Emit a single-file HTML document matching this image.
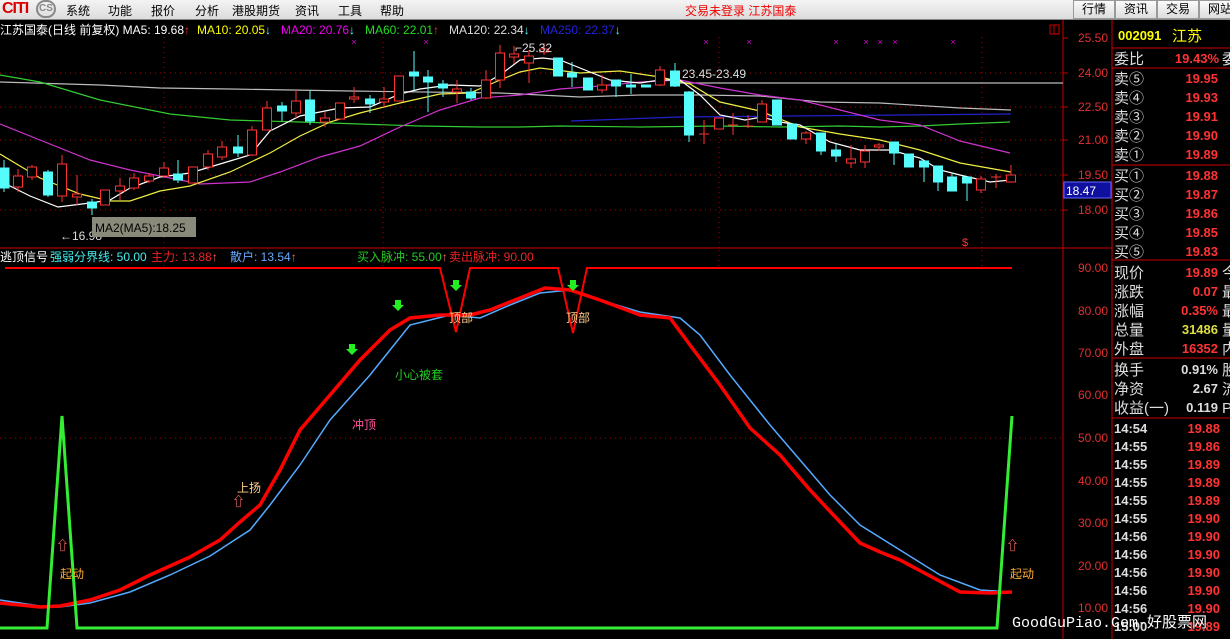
<!DOCTYPE html>
<html><head><meta charset="utf-8"><style>
*{margin:0;padding:0}
body{width:1230px;height:639px;background:#000;overflow:hidden;position:relative;font-family:"Liberation Sans","Noto Sans CJK SC",sans-serif}
#menu{position:absolute;left:0;top:0;width:1230px;height:19px;background:linear-gradient(#f4f4f4,#dcdcdc);font-size:12px;color:#000}
#menu span{position:absolute;top:2px}
.btn{position:absolute;top:0;height:17px;width:40px;border:1px solid #999;background:linear-gradient(#fafafa,#ddd);text-align:center;font-size:12px;line-height:17px}
svg{position:absolute;left:0;top:0}
</style></head><body>
<div id="menu">
<span style="left:2px;top:0;font:bold 16px 'Liberation Sans';color:#d00;letter-spacing:-1px">CITI</span>
<span style="left:36px;top:0;width:20px;height:18px;border-radius:10px;border:2px solid #888;box-sizing:border-box;font:bold 10px 'Liberation Sans';color:#888;text-align:center;line-height:14px">CS</span>
<span style="left:66px">系统</span><span style="left:108px">功能</span><span style="left:151px">报价</span><span style="left:195px">分析</span><span style="left:232px">港股期货</span><span style="left:295px">资讯</span><span style="left:338px">工具</span><span style="left:380px">帮助</span>
<span style="left:685px;color:#e00">交易未登录 江苏国泰</span>
<div class="btn" style="left:1073px">行情</div><div class="btn" style="left:1115px">资讯</div><div class="btn" style="left:1157px">交易</div><div class="btn" style="left:1199px">网站</div>
</div>
<svg width="1230" height="639" viewBox="0 0 1230 639" style="top:0" font-family="Liberation Sans, Noto Sans CJK SC, sans-serif">
<rect x="0" y="19" width="1230" height="1" fill="#888"/>
<g stroke="#a00" stroke-dasharray="1,4" stroke-width="1">
<line x1="0" y1="73" x2="1063" y2="73"/><line x1="0" y1="107" x2="1063" y2="107"/><line x1="0" y1="140" x2="1063" y2="140"/><line x1="0" y1="175" x2="1063" y2="175"/><line x1="0" y1="210" x2="1063" y2="210"/>
<line x1="164" y1="37" x2="164" y2="248"/><line x1="383" y1="37" x2="383" y2="248"/><line x1="719" y1="37" x2="719" y2="248"/><line x1="982" y1="37" x2="982" y2="248"/>
<line x1="0" y1="438" x2="1063" y2="438"/>
<line x1="164" y1="250" x2="164" y2="270"/><line x1="383" y1="250" x2="383" y2="270"/><line x1="719" y1="250" x2="719" y2="270"/><line x1="982" y1="250" x2="982" y2="270"/>
</g>
<g stroke="#c00" fill="none">
<line x1="1063" y1="20" x2="1063" y2="639"/><line x1="1112" y1="20" x2="1112" y2="639"/>
<line x1="0" y1="248" x2="1112" y2="248"/>
<line x1="1112" y1="48" x2="1230" y2="48"/><line x1="1112" y1="68" x2="1230" y2="68"/><line x1="1112" y1="165" x2="1230" y2="165"/><line x1="1112" y1="260" x2="1230" y2="260"/><line x1="1112" y1="358" x2="1230" y2="358"/><line x1="1112" y1="418" x2="1230" y2="418"/>
<rect x="1050" y="25" width="9" height="9"/><line x1="1054" y1="25" x2="1054" y2="34"/>
<line x1="1063" y1="38" x2="1068" y2="38"/><line x1="1063" y1="73" x2="1068" y2="73"/><line x1="1063" y1="107" x2="1068" y2="107"/><line x1="1063" y1="140" x2="1068" y2="140"/><line x1="1063" y1="175" x2="1068" y2="175"/><line x1="1063" y1="210" x2="1068" y2="210"/>
</g>
<g fill="#e03030" font-size="12" text-anchor="end">
<text x="1108" y="42">25.50</text><text x="1108" y="77">24.00</text><text x="1108" y="111">22.50</text><text x="1108" y="144">21.00</text><text x="1108" y="179">19.50</text><text x="1108" y="214">18.00</text>
<text x="1108" y="272">90.00</text><text x="1108" y="315">80.00</text><text x="1108" y="357">70.00</text><text x="1108" y="399">60.00</text><text x="1108" y="442">50.00</text><text x="1108" y="485">40.00</text><text x="1108" y="527">30.00</text><text x="1108" y="570">20.00</text><text x="1108" y="612">10.00</text>
</g>
<rect x="1064" y="182" width="47" height="16" fill="#1010a0" stroke="#66f"/>
<text x="1066" y="195" fill="#fff" font-size="12">18.47</text>
<g font-size="12">
<text x="0" y="34" fill="#fff">江苏国泰(日线 前复权) MA5: 19.68<tspan fill="#f33" font-weight="bold">↑</tspan></text>
<text x="197" y="34" fill="#ff0">MA10: 20.05<tspan fill="#5ff" font-weight="bold">↓</tspan></text>
<text x="281" y="34" fill="#e0e">MA20: 20.76<tspan fill="#5ff" font-weight="bold">↓</tspan></text>
<text x="365" y="34" fill="#2d2">MA60: 22.01<tspan fill="#f33" font-weight="bold">↑</tspan></text>
<text x="449" y="34" fill="#ddd">MA120: 22.34<tspan fill="#5ff" font-weight="bold">↓</tspan></text>
<text x="540" y="34" fill="#22d">MA250: 22.37<tspan fill="#5ff" font-weight="bold">↓</tspan></text>
<text x="0" y="261" fill="#fff">逃顶信号</text>
<text x="50" y="261" fill="#4ee">强弱分界线: 50.00</text>
<text x="151" y="261" fill="#e22">主力: 13.88<tspan fill="#f66" font-weight="bold">↑</tspan></text>
<text x="230" y="261" fill="#6af">散户: 13.54<tspan fill="#f66" font-weight="bold">↑</tspan></text>
<text x="357" y="261" fill="#2c2">买入脉冲: 55.00<tspan fill="#f66" font-weight="bold">↑</tspan></text>
<text x="449" y="261" fill="#e22">卖出脉冲: 90.00</text>
</g>
<g fill="#d0d" font-size="9" text-anchor="middle">
<text x="354" y="45">×</text><text x="426" y="45">×</text><text x="706" y="45">×</text><text x="749" y="45">×</text><text x="836" y="45">×</text><text x="866" y="45">×</text><text x="880" y="45">×</text><text x="895" y="45">×</text><text x="953" y="45">×</text>
</g>
<g fill="none" stroke-width="1.2">
<polyline stroke="#bbb" points="0,82 100,85 160,88 230,89 350,91 500,93 580,97 640,95 700,95 760,96 820,102 880,103 960,108 1011,110"/>
<polyline stroke="#bbb" points="680,83 1063,83"/>
<polyline stroke="#22c" points="571,121 679,117 1011,114"/>
<polyline stroke="#3c3" points="0,75 40,82 100,100 170,114 230,120 300,122 360,124 420,126 480,127 520,127 560,126 640,127 720,126 780,127 840,126 880,127 920,126 960,124 1010,122"/>
<polyline stroke="#c3c" points="0,124 40,140 90,160 130,170 170,178 200,184 250,182 280,172 320,157 360,146 400,127 440,110 480,98 520,95 560,89 600,86 640,82 680,80 720,88 760,95 800,100 840,110 880,120 920,125 960,141 1010,153"/>
<polyline stroke="#ee4" points="0,154 40,178 80,194 110,201 130,201 160,191 190,186 230,172 270,153 300,136 330,122 360,113 400,103 440,94 470,93 500,80 520,72 540,68 580,73 620,71 660,77 690,84 720,102 760,111 800,127 840,134 880,140 920,150 960,163 1011,172"/>
<polyline stroke="#fff" points="0,181 30,196 58,207 90,203 110,200 130,188 160,177 190,173 230,161 250,155 270,131 300,116 340,108 370,107 400,94 420,89 450,85 480,86 500,75 520,60 543,58 560,60 580,68 610,80 640,83 660,80 680,80 700,95 720,115 745,120 762,117 780,122 800,125 830,142 860,150 890,150 920,158 940,170 960,175 990,182 1011,180"/>
</g>
<g stroke-width="1">
<g stroke="#54fcfc" fill="#54fcfc">
<line x1="4" y1="160" x2="4" y2="192"/><rect x="0" y="168" width="9" height="20"/>
<line x1="48" y1="170" x2="48" y2="197"/><rect x="43.5" y="172" width="9" height="23"/>
<line x1="92" y1="199" x2="92" y2="215"/><rect x="87.5" y="202" width="9" height="6"/>
<line x1="178" y1="160" x2="178" y2="183"/><rect x="173.5" y="174" width="9" height="6"/>
<line x1="238" y1="135" x2="238" y2="157"/><rect x="233.5" y="147" width="9" height="6"/>
<line x1="282" y1="102" x2="282" y2="121"/><rect x="277.5" y="106" width="9" height="5"/>
<line x1="310" y1="90" x2="310" y2="125"/><rect x="305.5" y="100" width="9" height="21"/>
<line x1="370" y1="95" x2="370" y2="113"/><rect x="365.5" y="99" width="9" height="5"/>
<line x1="414" y1="51" x2="414" y2="90"/><rect x="409.5" y="72" width="9" height="4"/>
<line x1="428" y1="70" x2="428" y2="112"/><rect x="423.5" y="77" width="9" height="5"/>
<line x1="443" y1="80" x2="443" y2="97"/><rect x="438.5" y="84" width="9" height="4"/>
<line x1="471" y1="88" x2="471" y2="100"/><rect x="466.5" y="92" width="9" height="6"/>
<rect x="553.5" y="58" width="9" height="18"/>
<line x1="572" y1="62" x2="572" y2="87"/><rect x="567.5" y="73" width="9" height="4"/>
<rect x="583.5" y="78" width="9" height="12"/>
<line x1="616" y1="80" x2="616" y2="97"/><rect x="611.5" y="80" width="9" height="6"/>
<line x1="631" y1="74" x2="631" y2="94"/><rect x="626.5" y="85" width="9" height="2"/>
<rect x="641.5" y="85" width="9" height="2"/>
<line x1="675" y1="63" x2="675" y2="87"/><rect x="670.5" y="71" width="9" height="15"/>
<line x1="689" y1="91" x2="689" y2="142"/><rect x="684.5" y="92" width="9" height="43"/>
<rect x="772.5" y="100" width="9" height="25"/>
<rect x="787.5" y="124" width="9" height="15"/>
<line x1="821" y1="133" x2="821" y2="155"/><rect x="816.5" y="133" width="9" height="18"/>
<line x1="836" y1="144" x2="836" y2="162"/><rect x="831.5" y="150" width="9" height="6"/>
<line x1="894" y1="142" x2="894" y2="165"/><rect x="889.5" y="142" width="9" height="11"/>
<rect x="904.5" y="154" width="9" height="13"/>
<line x1="924" y1="161" x2="924" y2="182"/><rect x="919.5" y="161" width="9" height="6"/>
<line x1="938" y1="166" x2="938" y2="191"/><rect x="933.5" y="166" width="9" height="16"/>
<line x1="952" y1="173" x2="952" y2="191"/><rect x="947.5" y="177" width="9" height="14"/>
<line x1="967" y1="177" x2="967" y2="201"/><rect x="962.5" y="177" width="9" height="6"/>
</g>
<g stroke="#ff3232" fill="#000">
<line x1="18" y1="169" x2="18" y2="192"/><rect x="13.5" y="176" width="9" height="11"/>
<line x1="32" y1="165" x2="32" y2="180"/><rect x="27.5" y="167" width="9" height="10"/>
<line x1="62" y1="155" x2="62" y2="202"/><rect x="57.5" y="164" width="9" height="32"/>
<line x1="77" y1="175" x2="77" y2="205"/><rect x="72.5" y="194" width="9" height="3"/>
<rect x="100.5" y="190" width="9" height="15"/>
<line x1="120" y1="178" x2="120" y2="200"/><rect x="115.5" y="186" width="9" height="5"/>
<line x1="134" y1="173" x2="134" y2="190"/><rect x="129.5" y="178" width="9" height="10"/>
<line x1="149" y1="173" x2="149" y2="183"/><rect x="144.5" y="176" width="9" height="5"/>
<line x1="164" y1="162" x2="164" y2="178"/><rect x="159.5" y="168" width="9" height="8"/>
<rect x="188.5" y="167" width="9" height="16"/>
<line x1="208" y1="150" x2="208" y2="170"/><rect x="203.5" y="154" width="9" height="13"/>
<line x1="222" y1="141" x2="222" y2="160"/><rect x="217.5" y="147" width="9" height="10"/>
<line x1="252" y1="126" x2="252" y2="156"/><rect x="247.5" y="130" width="9" height="25"/>
<line x1="267" y1="101" x2="267" y2="130"/><rect x="262.5" y="108" width="9" height="22"/>
<line x1="296" y1="90" x2="296" y2="118"/><rect x="291.5" y="101" width="9" height="12"/>
<line x1="325" y1="112" x2="325" y2="127"/><rect x="320.5" y="118" width="9" height="4"/>
<rect x="335.5" y="103" width="9" height="16"/>
<line x1="354" y1="87" x2="354" y2="103"/><rect x="349.5" y="97" width="9" height="2"/>
<line x1="384" y1="87" x2="384" y2="107"/><rect x="379.5" y="99" width="9" height="3"/>
<rect x="394.5" y="76" width="9" height="25"/>
<line x1="457" y1="80" x2="457" y2="103"/><rect x="452.5" y="89" width="9" height="3"/>
<line x1="486" y1="70" x2="486" y2="99"/><rect x="481.5" y="80" width="9" height="18"/>
<line x1="500" y1="45" x2="500" y2="88"/><rect x="495.5" y="53" width="9" height="27"/>
<line x1="514" y1="46" x2="514" y2="64"/><rect x="509.5" y="54" width="9" height="3"/>
<line x1="529" y1="50" x2="529" y2="83"/><rect x="524.5" y="56" width="9" height="7"/>
<line x1="544" y1="43" x2="544" y2="55"/><rect x="539.5" y="49" width="9" height="3"/>
<line x1="602" y1="75" x2="602" y2="93"/><rect x="597.5" y="85" width="9" height="5"/>
<line x1="660" y1="66" x2="660" y2="86"/><rect x="655.5" y="70" width="9" height="15"/>
<line x1="704" y1="120" x2="704" y2="144"/><line x1="699" y1="134" x2="709" y2="134"/>
<rect x="714.5" y="118" width="9" height="11"/>
<line x1="733" y1="113" x2="733" y2="135"/><line x1="728" y1="125" x2="738" y2="125"/>
<line x1="748" y1="115" x2="748" y2="128"/><line x1="743" y1="126" x2="753" y2="126"/>
<line x1="762" y1="100" x2="762" y2="122"/><rect x="757.5" y="104" width="9" height="18"/>
<line x1="806" y1="131" x2="806" y2="144"/><rect x="801.5" y="133" width="9" height="6"/>
<line x1="851" y1="145" x2="851" y2="168"/><rect x="846.5" y="159" width="9" height="4"/>
<line x1="865" y1="145" x2="865" y2="168"/><rect x="860.5" y="151" width="9" height="11"/>
<line x1="879" y1="143" x2="879" y2="151"/><rect x="874.5" y="145" width="9" height="2"/>
<line x1="981" y1="176" x2="981" y2="193"/><rect x="976.5" y="179" width="9" height="11"/>
<line x1="996" y1="174" x2="996" y2="188"/><line x1="991" y1="177" x2="1001" y2="177"/>
<line x1="1011" y1="165" x2="1011" y2="182"/><rect x="1006.5" y="175" width="9" height="7"/>
</g>
</g>
<text x="515" y="52" fill="#ddd" font-size="12">⌐25.32</text>
<text x="682" y="78" fill="#ddd" font-size="12">23.45-23.49</text>
<text x="60" y="240" fill="#ddd" font-size="12">←16.98</text>
<rect x="92" y="217" width="104" height="20" fill="#8a8a7a"/>
<text x="95" y="232" fill="#000" font-size="12">MA2(MA5):18.25</text>
<text x="962" y="246" fill="#f33" font-size="11">$</text>
<polyline fill="none" stroke="#f00" stroke-width="2" points="5,268 440,268 456,332 470,268 558,268 573,333 587,268 1012,268"/>
<polyline fill="none" stroke="#5af" stroke-width="1.5" points="0,600 40,606 60,607 90,603 130,592 170,575 210,556 250,530 270,505 300,465 330,420 370,375 410,325 450,315 480,318 510,305 540,293 570,290 600,300 640,312 680,318 700,335 730,375 770,425 800,460 830,495 860,525 900,550 940,575 980,590 1012,592"/>
<polyline fill="none" stroke="#f00" stroke-width="3.5" points="0,603 40,607 60,606 90,600 120,590 150,575 190,557 220,540 240,522 260,505 280,470 300,430 330,395 360,360 390,330 410,318 440,315 470,315 490,310 520,298 545,288 570,290 600,300 640,315 670,318 690,345 720,385 750,428 780,455 810,490 840,522 860,543 880,552 900,560 930,576 960,592 990,593 1012,592"/>
<polyline fill="none" stroke="#3e3" stroke-width="3" points="0,628 47,628 62,416 77,628 997,628 1012,416"/>
<g font-size="12">
<text x="395" y="379" fill="#2c2">小心被套</text>
<text x="352" y="429" fill="#f59">冲顶</text>
<text x="237" y="492" fill="#fc8">上扬</text>
<text x="60" y="578" fill="#fa3">起动</text>
<text x="1010" y="578" fill="#fa3">起动</text>
<text x="449" y="322" fill="#fc8">顶部</text>
<text x="566" y="322" fill="#fc8">顶部</text>
<g fill="#f66" font-size="13" font-weight="bold"><text x="232" y="506">⇧</text><text x="56" y="550">⇧</text><text x="1006" y="550">⇧</text></g>
<g fill="#2e2"><path d="M395,300h6v5h3l-6,6-6-6h3z"/><path d="M349,344h6v5h3l-6,6-6-6h3z"/><path d="M453,280h6v5h3l-6,6-6-6h3z"/><path d="M570,280h6v5h3l-6,6-6-6h3z"/></g>
</g>
<g font-size="14">
<text x="1118" y="40" fill="#ff0" font-weight="bold" font-size="13">002091</text><text x="1172" y="41" fill="#ff0" font-size="15">江苏</text>
<g fill="#ddd" font-size="15">
<text x="1114" y="64">委比</text>
<text x="1114" y="84">卖⑤</text><text x="1114" y="103">卖④</text><text x="1114" y="122">卖③</text><text x="1114" y="141">卖②</text><text x="1114" y="160">卖①</text>
<text x="1114" y="181">买①</text><text x="1114" y="200">买②</text><text x="1114" y="219">买③</text><text x="1114" y="238">买④</text><text x="1114" y="257">买⑤</text>
<text x="1114" y="278">现价</text><text x="1114" y="297">涨跌</text><text x="1114" y="316">涨幅</text><text x="1114" y="335">总量</text><text x="1114" y="354">外盘</text>
<text x="1114" y="375">换手</text><text x="1114" y="394">净资</text><text x="1114" y="413">收益(一)</text>
<text x="1222" y="64">委</text><text x="1222" y="278">今</text><text x="1222" y="297">最</text><text x="1222" y="316">最</text><text x="1222" y="335">量</text><text x="1222" y="354">内</text><text x="1222" y="375">股</text><text x="1222" y="394">流</text><text x="1222" y="413">P</text>
</g>
<g fill="#f33" font-size="13" font-weight="bold" text-anchor="end">
<text x="1219" y="63">19.43%</text>
<text x="1218" y="83">19.95</text><text x="1218" y="102">19.93</text><text x="1218" y="121">19.91</text><text x="1218" y="140">19.90</text><text x="1218" y="159">19.89</text>
<text x="1218" y="180">19.88</text><text x="1218" y="199">19.87</text><text x="1218" y="218">19.86</text><text x="1218" y="237">19.85</text><text x="1218" y="256">19.83</text>
<text x="1218" y="277">19.89</text><text x="1218" y="296">0.07</text><text x="1218" y="315">0.35%</text><text x="1218" y="334" fill="#dd4">31486</text><text x="1218" y="353">16352</text>
<text x="1218" y="374" fill="#ddd">0.91%</text><text x="1218" y="393" fill="#ddd">2.67</text><text x="1218" y="412" fill="#ddd">0.119</text>
</g>
<g fill="#ddd" font-size="13" font-weight="bold">
<text x="1114" y="433">14:54</text><text x="1114" y="451">14:55</text><text x="1114" y="469">14:55</text><text x="1114" y="487">14:55</text><text x="1114" y="505">14:55</text><text x="1114" y="523">14:55</text><text x="1114" y="541">14:56</text><text x="1114" y="559">14:56</text><text x="1114" y="577">14:56</text><text x="1114" y="595">14:56</text><text x="1114" y="613">14:56</text><text x="1114" y="631">15:00</text>
</g>
<g fill="#f33" font-size="13" font-weight="bold" text-anchor="end">
<text x="1220" y="433">19.88</text><text x="1220" y="451">19.86</text><text x="1220" y="469">19.89</text><text x="1220" y="487">19.89</text><text x="1220" y="505">19.89</text><text x="1220" y="523">19.90</text><text x="1220" y="541">19.90</text><text x="1220" y="559">19.90</text><text x="1220" y="577">19.90</text><text x="1220" y="595">19.90</text><text x="1220" y="613">19.90</text><text x="1220" y="631">19.89</text>
</g>
</g>
<text x="1012" y="627" fill="#fff" font-size="15" font-family="Liberation Mono, Noto Sans CJK SC, monospace">GoodGuPiao.Com-好股票网</text>
</svg>
</body></html>
